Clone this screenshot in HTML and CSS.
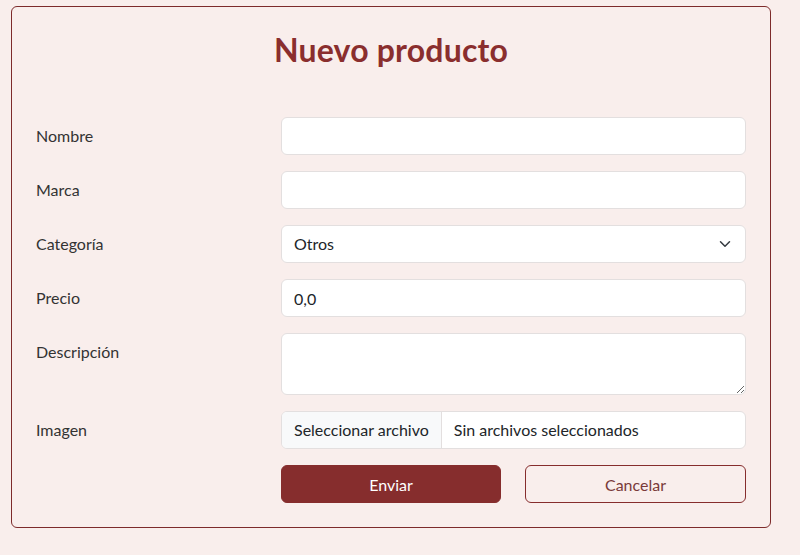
FILE: index.html
```html
<!DOCTYPE html>
<html lang="es">
<head>
<meta charset="utf-8">
<title>Nuevo producto</title>
<link rel="stylesheet" href="styles.css">
</head>
<body>
<div class="card">
  <h1 class="title">Nuevo producto</h1>
  <form class="form">
    <label class="label" for="nombre">Nombre</label>
    <input class="control" id="nombre" type="text">

    <label class="label" for="marca">Marca</label>
    <input class="control" id="marca" type="text">

    <label class="label" for="cat">Categoría</label>
    <div class="select">
      <span>Otros</span>
      <svg class="chev" width="12" height="12" viewBox="0 0 16 16"><path d="M2 5l6 6 6-6" fill="none" stroke="#343a40" stroke-width="2" stroke-linecap="round" stroke-linejoin="round"/></svg>
    </div>

    <label class="label" for="precio">Precio</label>
    <input class="control" id="precio" type="text" value="0,0">

    <label class="label" for="desc">Descripción</label>
    <textarea class="control area" id="desc"></textarea>

    <label class="label" for="img">Imagen</label>
    <div class="file">
      <span class="file-btn">Seleccionar archivo</span>
      <span class="file-name">Sin archivos seleccionados</span>
    </div>

    <div></div>
    <div class="actions">
      <button type="button" class="btn btn-primary">Enviar</button>
      <button type="button" class="btn btn-outline">Cancelar</button>
    </div>
  </form>
</div>
</body>
</html>
```
FILE: styles.css
```css
html, body {
  margin: 0;
  padding: 0;
  background: #f9eeec;
}
body {
  font-family: "Lato", "Open Sans", sans-serif;
  font-size: 16px;
  color: #212529;
  padding: 6px 0 0 11px;
}
.card {
  box-sizing: border-box;
  width: 760px;
  height: 522px;
  border: 1px solid #7d2b2b;
  border-radius: 6px;
  padding: 24px 24px 24px 24px;
  background: #f9eeec;
}
.title {
  margin: 0 0 48px;
  height: 38px;
  line-height: 38px;
  text-align: center;
  font-size: 32px;
  font-weight: 700;
  letter-spacing: 0.2px;
  color: #8a2e2e;
}
.form {
  display: grid;
  grid-template-columns: 245px 1fr;
  row-gap: 16px;
}
.label {
  padding-top: 7px;
  line-height: 24px;
  color: #333;
}
.control {
  box-sizing: border-box;
  width: 100%;
  height: 38px;
  margin: 0;
  padding: 6px 12px;
  font: inherit;
  line-height: 24px;
  color: #212529;
  background: #fff;
  border: 1px solid #e3dfdf;
  border-radius: 6px;
  outline: none;
}
.area {
  height: 62px;
  display: block;
  resize: vertical;
}
.select {
  box-sizing: border-box;
  height: 38px;
  padding: 6px 12px;
  line-height: 24px;
  background: #fff;
  border: 1px solid #e3dfdf;
  border-radius: 6px;
  display: flex;
  align-items: center;
  justify-content: space-between;
}
.chev { margin-right: 2px; }
.file {
  box-sizing: border-box;
  height: 38px;
  display: flex;
  background: #fff;
  border: 1px solid #e3dfdf;
  border-radius: 6px;
  overflow: hidden;
  line-height: 24px;
}
.file-btn {
  padding: 6px 12px;
  background: #f8f9fa;
  border-right: 1px solid #e3dfdf;
}
.file-name {
  padding: 6px 12px;
}
.actions {
  display: grid;
  grid-template-columns: 220px 221px;
  column-gap: 24px;
}
.btn {
  box-sizing: border-box;
  height: 38px;
  font: inherit;
  border-radius: 6px;
  cursor: pointer;
}
.btn-primary {
  background: #862d2d;
  border: 1px solid #862d2d;
  color: #fff;
}
.btn-outline {
  background: transparent;
  border: 1px solid #862d2d;
  color: #7a3a3a;
}
```
